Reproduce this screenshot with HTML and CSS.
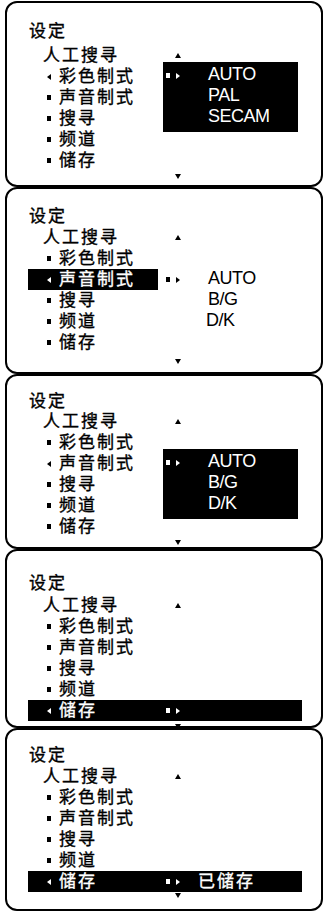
FILE: index.html
```html
<!DOCTYPE html>
<html lang="zh-CN">
<head>
<meta charset="utf-8">
<title>设定 - 人工搜寻</title>
<link rel="stylesheet" href="styles.css">
</head>
<body>
<main class="screens">

  <section class="panel p1">
    <div class="menu">
      <div class="cell title">设定</div>
      <div class="cell sub">人工搜寻</div>
      <div class="cell item"><i class="tri-l"></i>彩色制式</div>
      <div class="cell item"><i class="sq"></i>声音制式</div>
      <div class="cell item"><i class="sq"></i>搜寻</div>
      <div class="cell item"><i class="sq"></i>频道</div>
      <div class="cell item"><i class="sq"></i>储存</div>
      <div class="up"><i class="tri-u"></i></div>
      <div class="opts rows3">
        <div class="opt"><span class="mk"><i class="sq"></i><i class="tri-r"></i></span><span class="en">AUTO</span></div>
        <div class="opt"><span class="mk"></span><span class="en">PAL</span></div>
        <div class="opt"><span class="mk"></span><span class="en">SECAM</span></div>
      </div>
      <div class="down"><i class="tri-d"></i></div>
    </div>
  </section>

  <section class="panel p2">
    <div class="menu">
      <div class="cell title">设定</div>
      <div class="cell sub">人工搜寻</div>
      <div class="cell item"><i class="sq"></i>彩色制式</div>
      <div class="cell item hl"><i class="tri-l"></i>声音制式</div>
      <div class="cell item"><i class="sq"></i>搜寻</div>
      <div class="cell item"><i class="sq"></i>频道</div>
      <div class="cell item"><i class="sq"></i>储存</div>
      <div class="up"><i class="tri-u"></i></div>
      <div class="opt row4"><span class="mk"><i class="sq"></i><i class="tri-r"></i></span><span class="en">AUTO</span></div>
      <div class="opt row5"><span class="mk"></span><span class="en">B/G</span></div>
      <div class="opt row6"><span class="mk"></span><span class="en shift">D/K</span></div>
      <div class="down"><i class="tri-d"></i></div>
    </div>
  </section>

  <section class="panel p3">
    <div class="menu">
      <div class="cell title">设定</div>
      <div class="cell sub">人工搜寻</div>
      <div class="cell item"><i class="sq"></i>彩色制式</div>
      <div class="cell item"><i class="tri-l"></i>声音制式</div>
      <div class="cell item"><i class="sq"></i>搜寻</div>
      <div class="cell item"><i class="sq"></i>频道</div>
      <div class="cell item"><i class="sq"></i>储存</div>
      <div class="up"><i class="tri-u"></i></div>
      <div class="opts rows4">
        <div class="opt"><span class="mk"><i class="sq"></i><i class="tri-r"></i></span><span class="en">AUTO</span></div>
        <div class="opt"><span class="mk"></span><span class="en">B/G</span></div>
        <div class="opt"><span class="mk"></span><span class="en">D/K</span></div>
      </div>
      <div class="down"><i class="tri-d"></i></div>
    </div>
  </section>

  <section class="panel p4">
    <div class="menu">
      <div class="cell title">设定</div>
      <div class="cell sub">人工搜寻</div>
      <div class="cell item"><i class="sq"></i>彩色制式</div>
      <div class="cell item"><i class="sq"></i>声音制式</div>
      <div class="cell item"><i class="sq"></i>搜寻</div>
      <div class="cell item"><i class="sq"></i>频道</div>
      <div class="cell item wide hl">
        <span class="lhs"><i class="tri-l"></i>储存</span>
        <span class="mk"><i class="sq"></i><i class="tri-r"></i></span>
      </div>
      <div class="up"><i class="tri-u"></i></div>
      <div class="down"><i class="tri-d"></i></div>
    </div>
  </section>

  <section class="panel p5">
    <div class="menu">
      <div class="cell title">设定</div>
      <div class="cell sub">人工搜寻</div>
      <div class="cell item"><i class="sq"></i>彩色制式</div>
      <div class="cell item"><i class="sq"></i>声音制式</div>
      <div class="cell item"><i class="sq"></i>搜寻</div>
      <div class="cell item"><i class="sq"></i>频道</div>
      <div class="cell item wide hl">
        <span class="lhs"><i class="tri-l"></i>储存</span>
        <span class="mk short"><i class="sq"></i><i class="tri-r"></i></span>
        <span class="done">已储存</span>
      </div>
      <div class="up"><i class="tri-u"></i></div>
      <div class="down"><i class="tri-d"></i></div>
    </div>
  </section>

</main>
</body>
</html>
```
FILE: styles.css
```css
* { box-sizing: border-box; }

html, body {
  margin: 0;
  padding: 0;
  background: #fff;
}

body {
  font-family: "Liberation Sans", "Noto Sans CJK SC", sans-serif;
  color: #000;
  font-size: 17px;
  line-height: 21px;
  -webkit-text-stroke: 0.35px currentColor;
}

.screens {
  display: flex;
  flex-direction: column;
  padding-top: 1px;
  padding-left: 5px;
}

.panel {
  width: 318px;
  border: 2px solid #000;
  border-radius: 12px;
  padding-left: 21px;
}

.p1 { height: 186px; padding-top: 18px; --title: 24px; --down: 3px; }
.p2 { height: 187px; padding-top: 17px; --title: 21px; --down: 6px; }
.p3 { height: 175px; padding-top: 15px; --title: 20px; --down: 3px; }
.p4 { height: 179px; padding-top: 22px; --title: 22px; --down: 3px; }
.p5 { height: 183px; padding-top: 15px; --title: 21px; --down: 1px; }

.menu {
  display: grid;
  grid-template-columns: 130px 139px;
  column-gap: 5px;
  grid-template-rows: var(--title) repeat(6, 21px) auto;
}

.cell {
  grid-column: 1;
  letter-spacing: 2px;
  white-space: nowrap;
}

.title { padding-left: 1px; }
.sub { padding-left: 15px; }

.item {
  display: flex;
  align-items: center;
  padding-left: 19px;
}

.item > i, .lhs > i { margin-right: 8px; flex: none; }

.hl {
  background: #000;
  color: #fff;
}

.wide {
  grid-column: 1 / -1;
}

.lhs {
  display: flex;
  align-items: center;
  width: 116px;
}

.sq {
  display: block;
  width: 4px;
  height: 5px;
  background: currentColor;
}

.tri-l {
  display: block;
  width: 0;
  height: 0;
  border-top: 3px solid transparent;
  border-bottom: 3px solid transparent;
  border-right: 4px solid currentColor;
}

.tri-r {
  display: block;
  width: 0;
  height: 0;
  border-top: 3px solid transparent;
  border-bottom: 3px solid transparent;
  border-left: 4px solid currentColor;
}

.tri-u {
  display: block;
  width: 0;
  height: 0;
  border-left: 3px solid transparent;
  border-right: 3px solid transparent;
  border-bottom: 5px solid #000;
}

.tri-d {
  display: block;
  width: 0;
  height: 0;
  border-left: 3px solid transparent;
  border-right: 3px solid transparent;
  border-top: 5px solid #000;
}

.up {
  grid-column: 2;
  grid-row: 2;
  display: flex;
  align-items: center;
  padding-left: 12px;
}

.down {
  grid-column: 2;
  grid-row: 8;
  padding-left: 12px;
  padding-top: var(--down);
}

.opts {
  grid-column: 2;
  background: #000;
  color: #fff;
  margin: -4px 4px -3px 0;
  padding-top: 3px;
  display: grid;
  grid-auto-rows: 21px;
}

.rows3 { grid-row: 3 / span 3; }
.rows4 { grid-row: 4 / span 3; }

.row4 { grid-column: 2; grid-row: 4; }
.row5 { grid-column: 2; grid-row: 5; }
.row6 { grid-column: 2; grid-row: 6; }

.opt {
  display: flex;
  align-items: center;
}

.mk {
  display: flex;
  align-items: center;
  gap: 6px;
  width: 45px;
  padding-left: 3px;
  flex: none;
}

.mk.short { width: 35px; }

.en {
  font-size: 18px;
  line-height: 19px;
  letter-spacing: -0.5px;
  align-self: flex-start;
  -webkit-text-stroke: 0;
}

.en.shift { margin-left: -2px; }

.done { letter-spacing: 2px; }
```
